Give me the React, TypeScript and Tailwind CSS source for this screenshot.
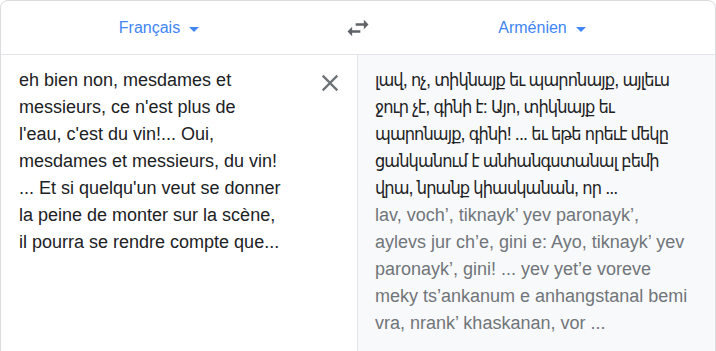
import React from 'react';

const sourceLines = [
  'eh bien non, mesdames et',
  "messieurs, ce n'est plus de",
  "l'eau, c'est du vin!... Oui,",
  'mesdames et messieurs, du vin!',
  "... Et si quelqu'un veut se donner",
  'la peine de monter sur la scène,',
  'il pourra se rendre compte que...',
];

const targetLines = [
  'լավ, ոչ, տիկնայք եւ պարոնայք, այլեւս',
  'ջուր չէ, գինի է: Այո, տիկնայք եւ',
  'պարոնայք, գինի! ... եւ եթե որեւէ մեկը',
  'ցանկանում է անհանգստանալ բեմի',
  'վրա, նրանք կիասկանան, որ ...',
];

const romanLines = [
  'lav, voch’, tiknayk’ yev paronayk’,',
  'aylevs jur ch’e, gini e: Ayo, tiknayk’ yev',
  'paronayk’, gini! ... yev yet’e voreve',
  'meky ts’ankanum e anhangstanal bemi',
  'vra, nrank’ khaskanan, vor ...',
];

const Caret = () => (
  <svg width="24" height="24" viewBox="0 0 24 24" className="ml-[2px] translate-y-[1px]" fill="#4285f4">
    <path d="M7 10l5 5 5-5z" />
  </svg>
);

const LangButton = ({ label }: { label: string }) => (
  <button className="flex items-center text-[16px] text-[#4285f4]">
    <span>{label}</span>
    <Caret />
  </button>
);

export default function App() {
  return (
    <div className="w-[716px] h-[351px] bg-white overflow-hidden font-['Liberation_Sans','Noto_Sans','DejaVu_Sans',sans-serif]">
      <div className="flex flex-col h-[360px] border border-[#dadce0] rounded-t-lg overflow-hidden">
        {/* language bar */}
        <div className="flex items-center h-[54px] border-b border-[#e3e5e8] shrink-0">
          <div className="w-[323px] flex justify-center">
            <LangButton label="Français" />
          </div>
          <div className="w-[68px] flex justify-center">
            <svg width="28" height="28" viewBox="0 0 24 24" fill="#5f6368">
              <path d="M6.99 11L3 15l3.99 4v-3H14v-2H6.99v-3zM21 9l-3.99-4v3H10v2h7.01v3L21 9z" />
            </svg>
          </div>
          <div className="flex-1 flex justify-center pr-[16px]">
            <LangButton label="Arménien" />
          </div>
        </div>

        {/* panels */}
        <div className="flex flex-1">
          <div className="w-[357px] shrink-0 flex pl-[18px] pt-[12px] border-r border-[#e3e5e8]">
            <div className="flex-1 text-[18px] leading-[27px] text-[#202124] whitespace-nowrap">
              {sourceLines.map((l) => (
                <div key={l}>{l}</div>
              ))}
            </div>
            <button className="w-[28px] h-[28px] mr-[13px] mt-[2px] text-[#70757a]">
              <svg width="28" height="28" viewBox="0 0 24 24" fill="currentColor">
                <path d="M19 6.41L17.59 5 12 10.59 6.41 5 5 6.41 10.59 12 5 17.59 6.41 19 12 13.41 17.59 19 19 17.59 13.41 12z" />
              </svg>
            </button>
          </div>
          <div className="flex-1 min-w-0 bg-[#f8f9fa] pl-[17px] pt-[12px] text-[18px] leading-[27px] whitespace-nowrap">
            <div className="text-[#202124] tracking-[-0.9px] font-['Liberation_Sans','DejaVu_Sans_Condensed','DejaVu_Sans',sans-serif]">
              {targetLines.map((l) => (
                <div key={l}>{l}</div>
              ))}
            </div>
            <div className="text-[#70757a]">
              {romanLines.map((l) => (
                <div key={l}>{l}</div>
              ))}
            </div>
          </div>
        </div>
      </div>
    </div>
  );
}
